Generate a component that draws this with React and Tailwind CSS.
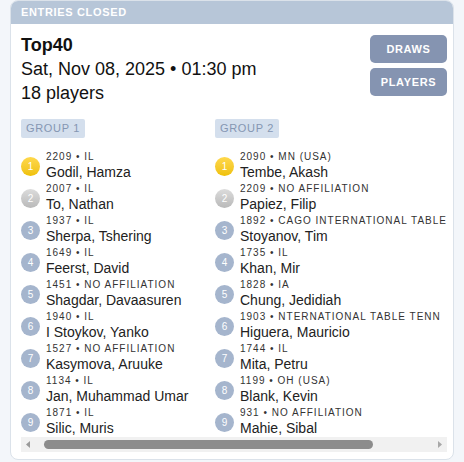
const group1 = [
  { rating: '2209', aff: 'IL', name: 'Godil, Hamza' },
  { rating: '2007', aff: 'IL', name: 'To, Nathan' },
  { rating: '1937', aff: 'IL', name: 'Sherpa, Tshering' },
  { rating: '1649', aff: 'IL', name: 'Feerst, David' },
  { rating: '1451', aff: 'NO AFFILIATION', name: 'Shagdar, Davaasuren' },
  { rating: '1940', aff: 'IL', name: 'I Stoykov, Yanko' },
  { rating: '1527', aff: 'NO AFFILIATION', name: 'Kasymova, Aruuke' },
  { rating: '1134', aff: 'IL', name: 'Jan, Muhammad Umar' },
  { rating: '1871', aff: 'IL', name: 'Silic, Muris' },
]

const group2 = [
  { rating: '2090', aff: 'MN (USA)', name: 'Tembe, Akash' },
  { rating: '2209', aff: 'NO AFFILIATION', name: 'Papiez, Filip' },
  { rating: '1892', aff: 'CAGO INTERNATIONAL TABLE', name: 'Stoyanov, Tim' },
  { rating: '1735', aff: 'IL', name: 'Khan, Mir' },
  { rating: '1828', aff: 'IA', name: 'Chung, Jedidiah' },
  { rating: '1903', aff: 'NTERNATIONAL TABLE TENN', name: 'Higuera, Mauricio' },
  { rating: '1744', aff: 'IL', name: 'Mita, Petru' },
  { rating: '1199', aff: 'OH (USA)', name: 'Blank, Kevin' },
  { rating: '931', aff: 'NO AFFILIATION', name: 'Mahie, Sibal' },
]

function Seed({ n }) {
  const tone =
    n === 1 ? 'bg-gradient-to-b from-[#ffd84a] to-[#efc100]'
    : n === 2 ? 'bg-gradient-to-b from-[#dcdcdc] to-[#b9b9b9]'
    : 'bg-[#a5b5cd]'
  return (
    <div className={`w-[19px] h-[19px] rounded-full ${tone} flex items-center justify-center text-[10px] text-white shrink-0`}>
      {n}
    </div>
  )
}

function Group({ title, players, wide }) {
  return (
    <div className={wide ? 'w-[324px] shrink-0' : 'w-[194px] shrink-0'}>
      <div className="w-fit h-[19px] bg-[#d4dfed] text-[#8596b2] text-[11px] tracking-[0.06em] leading-[19px] px-[5px] rounded-[2px]">{title}</div>
      <div className="mt-[13px] flex flex-col gap-[2px]">
        {players.map((p, i) => (
          <div key={i} className="flex items-center gap-[6px] h-[30px]">
            <Seed n={i + 1} />
            <div className="whitespace-nowrap">
              <div className="text-[10px] leading-[12px] tracking-[0.1em] text-[#333]">{p.rating} • {p.aff}</div>
              <div className="text-[14px] leading-[18px] text-[#222]">{p.name}</div>
            </div>
          </div>
        ))}
      </div>
    </div>
  )
}

// scrollbar is drawn, the headless browser hides the native one
function ScrollBar() {
  return (
    <div className="h-[15px] bg-[#f1f1f1] flex items-center">
      <svg width="15" height="15" viewBox="0 0 15 15" className="shrink-0">
        <path d="M9 4 L5 7.5 L9 11 Z" fill="#9a9a9a" />
      </svg>
      <div className="flex-1 flex items-center px-[8px]">
        <div className="h-[9px] w-[329px] rounded-full bg-[#8c8c8c]" />
      </div>
      <svg width="15" height="15" viewBox="0 0 15 15" className="shrink-0">
        <path d="M6 4 L10 7.5 L6 11 Z" fill="#a8a8a8" />
      </svg>
    </div>
  )
}

export default function App() {
  return (
    <div className="min-h-screen bg-[#f3f6fa] px-[10px]" style={{ fontFamily: '"Liberation Sans", Arial, sans-serif' }}>
      <div className="rounded-lg border border-[#dbe2ea] bg-white overflow-hidden">
        <div className="h-[23px] bg-[#b7c6d8] px-[10px] flex items-center text-[11px] font-bold tracking-[0.06em] text-white">ENTRIES CLOSED</div>
        <div className="pl-[10px] pr-[6px] pb-[7px]">
          <div className="flex justify-between pt-[9px]">
            <div className="text-[18px] leading-[24px] text-[#111]">
              <div className="font-bold">Top40</div>
              <div>Sat, Nov 08, 2025 • 01:30 pm</div>
              <div>18 players</div>
            </div>
            <div className="flex flex-col gap-[5px] pt-[2px]">
              <button className="w-[77px] h-[28px] rounded-[5px] bg-[#8594b1] text-white text-[11px] font-bold tracking-[0.06em]">DRAWS</button>
              <button className="w-[77px] h-[28px] rounded-[5px] bg-[#8594b1] text-white text-[11px] font-bold tracking-[0.06em]">PLAYERS</button>
            </div>
          </div>
          <div className="mt-[14px] overflow-hidden">
            <div className="flex w-max">
              <Group title="GROUP 1" players={group1} />
              <Group title="GROUP 2" players={group2} wide />
            </div>
          </div>
          <ScrollBar />
        </div>
      </div>
    </div>
  )
}
